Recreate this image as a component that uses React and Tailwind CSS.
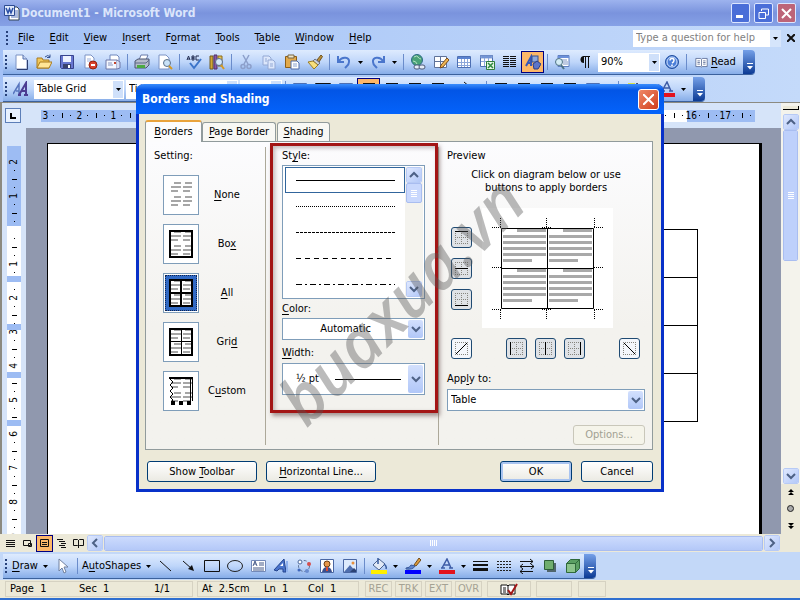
import React, { useState } from 'react';

// 16x16 toolbar glyphs
const glyphs = {
  newDoc: (
    <>
      <path d="M3 1h7l4 4v10H3z" fill="#fff" stroke="#7d93c4" />
      <path d="M10 1v4h4" fill="#c9d8f5" stroke="#5571ad" />
      <path d="M4 15.500h10.500V6" stroke="#2e3f70" fill="none" />
    </>
  ),
  open: (
    <>
      <path d="M1 14V4h5l1 2h6v8z" fill="#f2c85a" stroke="#a87b1e" />
      <path d="M1 14l3-6h12l-3 6z" fill="#ffe597" stroke="#a87b1e" />
      <path d="M9 3q3-3 5 0M14 .5V3.500h-3" fill="none" stroke="#33508f" />
    </>
  ),
  save: (
    <>
      <path d="M1.500 1.500h13v13h-12l-1-1z" fill="#6877d0" stroke="#38438e" />
      <path d="M4 2h8v6H4z" fill="#eef2ff" />
      <path d="M4 10h8v4H4z" fill="#39416e" />
      <path d="M9 11h2v3H9z" fill="#fff" />
    </>
  ),
  permission: (
    <>
      <path d="M3 1h6l3 3v10H3z" fill="#fff" stroke="#7d93c4" />
      <path d="M5 5h4M5 7h5" stroke="#9fb2dd" />
      <circle cx="11" cy="11" r="4" fill="#d8412d" stroke="#94230f" />
      <path d="M9 11h4" stroke="#fff" strokeWidth="2" />
    </>
  ),
  mail: (
    <>
      <path d="M5 6V1h7l2 2v5" fill="#fff" stroke="#6f87bd" />
      <path d="M1 6h11v9H1z" fill="#f4f7ff" stroke="#6f78a8" />
      <path d="M3 9h4M3 11h5" stroke="#8894bd" />
      <path d="M12 6l3 2v6l-3 1" fill="#d5ddf5" stroke="#6f78a8" />
      <path d="M9 8h2v2H9z" fill="#c4442e" />
    </>
  ),
  print: (
    <>
      <path d="M5 6l2-5h7l-2 5" fill="#fff" stroke="#697aa8" />
      <path d="M1 7l3-2h11v6l-3 3H1z" fill="#b6bccb" stroke="#4b5570" />
      <path d="M1 9h11l3-3" stroke="#5f6b88" fill="none" />
      <path d="M3 11h8v3H3z" fill="#4caa42" />
    </>
  ),
  preview: (
    <>
      <path d="M2 1h7l3 3v11H2z" fill="#fff" stroke="#7d93c4" />
      <circle cx="10" cy="9" r="3.500" fill="#c9e2f7" stroke="#5c7188" />
      <path d="M12 12l3 3" stroke="#d59a24" strokeWidth="2" />
    </>
  ),
  spell: (
    <>
      <path d="M1 6l1.500-4L4 6M1.500 5h2M6 2v4h2V4H6h2V2zM13 2h-3v4h3" fill="none" stroke="#222c50" />
      <path d="M4 9l4 5 7-9" fill="none" stroke="#3b74c9" strokeWidth="2" />
    </>
  ),
  research: (
    <>
      <path d="M1 2h3v13H1z" fill="#d1a735" stroke="#715b20" />
      <path d="M5 1h3v14H5z" fill="#8b56a8" stroke="#51336b" />
      <path d="M9 2h4v10H9z" fill="#e8c556" stroke="#8a6a1a" />
      <circle cx="10" cy="8" r="3.500" fill="#d5e8fa" stroke="#576d8b" />
      <path d="M12 11l3 4" stroke="#d59a24" strokeWidth="2" />
    </>
  ),
  cut: (
    <g fill="none" stroke="#8c9fca" strokeWidth="1.500">
      <path d="M5 1l5 9M11 1L6 10" />
      <circle cx="5" cy="12.500" r="2" />
      <circle cx="11" cy="12.500" r="2" />
    </g>
  ),
  copy: (
    <g fill="#dce7fb" stroke="#93a8d4">
      <path d="M2 2h6l2 2v7H2z" />
      <path d="M7 6h5l2 2v7H7z" />
      <path d="M9 10h3M9 12h3M4 5h2M4 7h2" />
    </g>
  ),
  paste: (
    <>
      <path d="M1.500 2.500h11v11h-11z" fill="#e2a94a" stroke="#8c5e17" />
      <path d="M4 1h6v3H4z" fill="#efe5c8" stroke="#776541" />
      <path d="M7 7h6l2 2v6H7z" fill="#fff" stroke="#506aa8" />
      <path d="M9 10h4M9 12h4" stroke="#8aa0d0" />
    </>
  ),
  brush: (
    <>
      <path d="M10 6l4-5 1.500 1.500L12 8z" fill="#b98e3a" stroke="#6f5420" />
      <path d="M8 5l5 4-2 2-5-4z" fill="#c9ced9" stroke="#697088" />
      <path d="M6 7l5 4-4 4L1 8z" fill="#f7df7c" stroke="#9b7c24" />
    </>
  ),
  undo: <path d="M2 2v6h6M3 7c3-5 11-4 10 1 0 3-2 4-4 6" fill="none" stroke="#4a76cc" strokeWidth="2" />,
  redo: <path d="M14 2v6H8M13 7C10 2 2 3 3 8c0 3 2 4 4 6" fill="none" stroke="#4a76cc" strokeWidth="2" />,
  link: (
    <>
      <circle cx="7" cy="6" r="5.500" fill="#4aa377" stroke="#2c6a86" />
      <path d="M4 3q3-2 4 0t3 2M3 7q3 0 4 3" fill="none" stroke="#b6e2c6" />
      <rect x="4" y="11" width="6" height="4" rx="2" fill="#e5ecf8" stroke="#4d5a78" />
      <rect x="9" y="11" width="6" height="4" rx="2" fill="#e5ecf8" stroke="#4d5a78" />
    </>
  ),
  drawTable: (
    <>
      <path d="M1.500 2.500h12v11h-12zM1 7.500h12M7.500 2v11" fill="#fff" stroke="#5f7299" />
      <path d="M7 14l1-3 6-7 2 2-6 7z" fill="#edb654" stroke="#7c4c1a" />
    </>
  ),
  table: (
    <>
      <path d="M1.500 2.500h13v11h-13z" fill="#fff" stroke="#4d6fb3" />
      <path d="M2 3h12v2H2z" fill="#5a82d0" />
      <path d="M2 8.500h12M2 11.500h12M5.500 5v8M8.500 5v8M11.500 5v8" stroke="#8ca7da" />
    </>
  ),
  excel: (
    <>
      <path d="M1.500 1.500h12v11h-12z" fill="#fff" stroke="#4d6fb3" />
      <path d="M2 2h11v2H2zM2 7.500h11M5.500 4v8M9.500 4v8" fill="#5a82d0" stroke="#8ca7da" />
      <path d="M7.500 7.500h8v8h-8z" fill="#e6f5e6" stroke="#2e7d3c" />
      <path d="M9 9l5 5M14 9l-5 5" stroke="#2e8a3f" strokeWidth="1.500" />
    </>
  ),
  columns: <path d="M1 2.500h6M1 4.500h6M1 6.500h6M1 8.500h6M1 10.500h6M1 12.500h6M8 2.500h6M8 4.500h6M8 6.500h6M8 8.500h6M8 10.500h6M8 12.500h6" stroke="#111" />,
  drawing: (
    <>
      <path d="M1 12L6 3v9M3 9h3" fill="none" stroke="#3657b8" strokeWidth="2" />
      <rect x="7" y="2" width="6" height="6" fill="#8ea8dd" stroke="#37508e" />
      <path d="M8 10l4-3 4 3-3 5H9z" fill="#5d75c9" stroke="#2c3f86" />
    </>
  ),
  docMap: (
    <>
      <path d="M4 1.500h11v11H4z" fill="#fff" stroke="#5f7fc0" />
      <path d="M4 2h11v2H4z" fill="#6b90da" />
      <path d="M8 6h5M9 8h5M9 10h5" stroke="#7f95c4" />
      <circle cx="5" cy="8" r="3.500" fill="#d3ecf5" stroke="#4d7285" />
      <path d="M7 11l3 4" stroke="#4d7285" strokeWidth="2" />
    </>
  ),
  pilcrow: (
    <>
      <path d="M7 2a3.500 3.500 0 0 0 0 7z" fill="#111" />
      <path d="M6 2.500h7M8.500 2v12M11.500 2v12" stroke="#111" />
    </>
  ),
  help: (
    <>
      <circle cx="8" cy="8" r="6.500" fill="#4c7fd8" stroke="#23509f" />
      <circle cx="8" cy="8" r="5" fill="none" stroke="#cfe0fa" />
      <path d="M6 6.500q0-2 2-2t2 1.700T8 9M8 10.500v1.500" fill="none" stroke="#fff" strokeWidth="1.500" />
    </>
  ),
  read: (
    <>
      <path d="M1 3h6l1 1 1-1h6v10H9l-1 1-1-1H1z" fill="#fff" stroke="#596a94" />
      <path d="M8 4v9M3 6h3M3 8h3M3 10h3M10 6h3M10 8h3M10 10h3" stroke="#596a94" />
    </>
  ),
  styles: (
    <>
      <path d="M0 13L6 3v10M3 10h3" fill="none" stroke="#5876be" strokeWidth="1.500" />
      <path d="M6 14l7-12v12M9 10h4M5 14h3M11 14h4" fill="none" stroke="#4c3d92" strokeWidth="2" />
    </>
  ),
  align: <path d="M2 2.500h12M2 5.500h8M2 8.500h12M2 11.500h8" stroke="#111" />,
  highlight: (
    <>
      <path d="M3 2h7v4H3z" fill="#d8e34a" />
      <path d="M1 12h14v3H1z" fill="#ff0" />
      <path d="M5 10l7-8 2 2-6 7z" fill="#d6dbe7" stroke="#495274" />
    </>
  ),
  fontColor: (
    <>
      <path d="M3 10L8 1l4 9M5 7h5M2 10h4M10 10h4" fill="none" stroke="#3e5ca6" strokeWidth="1.500" />
      <path d="M0 12h16v4H0z" fill="#e3121d" />
    </>
  ),
  cursor: <path d="M4 1v12l3-3 2 5 2-1-2-5h4z" fill="#fff" stroke="#70809f" />,
  line: <path d="M2 3l11 10" stroke="#111" />,
  arrow: (
    <>
      <path d="M2 3l9 8" stroke="#111" />
      <path d="M13 13l-6-2 4-4z" fill="#111" />
    </>
  ),
  rect: <path d="M.5 2.500h15v11H.5z" fill="none" stroke="#111" />,
  oval: <ellipse cx="8" cy="8" rx="7.500" ry="5.500" fill="none" stroke="#222" />,
  textBox: (
    <>
      <path d="M1.500 2.500h14v11h-14z" fill="#fff" stroke="#7389b8" />
      <path d="M3 8l2-5 2 5M4 6h2M9 5h5M9 7h5M3 10h11M3 12h11" fill="none" stroke="#465a89" />
    </>
  ),
  wordArt: (
    <>
      <path d="M1 12L11 1l2 13h-3v-3H6l-2 2z" fill="#4a74cc" stroke="#24458f" />
      <path d="M7 8l3-3v3z" fill="#fff" />
      <path d="M14 3v11" stroke="#8fb1ee" strokeWidth="2" />
    </>
  ),
  diagram: (
    <>
      <circle cx="8" cy="8" r="5.500" fill="none" stroke="#5c6f93" strokeDasharray="3 2" />
      <circle cx="4" cy="4" r="2" fill="#fff" stroke="#4d6a9d" />
      <circle cx="13" cy="6" r="2" fill="#d64e4e" />
      <circle cx="3" cy="12" r="1.500" fill="#3e67bd" />
      <circle cx="11" cy="13" r="2" fill="#6a8ccf" />
    </>
  ),
  clipArt: (
    <>
      <path d="M1.500 1.500h13v13h-13z" fill="#fff" stroke="#4966a2" />
      <circle cx="8" cy="6" r="3" fill="#e6974a" stroke="#6b3e16" />
      <path d="M3 14q1-5 5-5t5 5z" fill="#3a4f8e" />
      <path d="M7 9h2v4H7z" fill="#d84b35" />
    </>
  ),
  picture: (
    <>
      <path d="M1.500 1.500h13v13h-13z" fill="#dceafc" stroke="#4966a2" />
      <path d="M2 14l6-7 6 7z" fill="#4e6eae" />
      <path d="M8 14l4-4 2 2v2z" fill="#2b4274" />
      <circle cx="11" cy="5" r="1.500" fill="#e7903c" />
    </>
  ),
  fill: (
    <>
      <path d="M2 7l6-6 6 5-6 6z" fill="#e1e9f5" stroke="#48618f" />
      <path d="M7 6V0M13 6q3 2 2 5" fill="none" stroke="#365b9e" strokeWidth="1.500" />
      <path d="M0 12h16v4H0z" fill="#ffef00" />
    </>
  ),
  pen: (
    <>
      <path d="M9 7l5-7 2 2-5 6z" fill="#dd9b3c" stroke="#704c18" />
      <path d="M1 10q4 0 5-3l4 1q-2 4-9 3z" fill="#5f86cf" stroke="#38589a" />
      <path d="M0 12h16v4H0z" fill="#00f" />
    </>
  ),
  lineStyle: (
    <>
      <path d="M0 3.500h15" stroke="#111" />
      <path d="M0 7h15" stroke="#111" strokeWidth="2" />
      <path d="M0 11.500h15" stroke="#111" strokeWidth="3" />
    </>
  ),
  dashStyle: <path d="M1 3.500h14M1 6.500h14M1 9.500h14M1 12.500h14" stroke="#222" strokeDasharray="2 1" />,
  arrowStyle: <path d="M1 3.500h13M11 1l3 2.500L11 6M1 8.500h14M4 6L1 8.500 4 11M12 6l3 2.500-3 2.500M1 13.500h13M4 11l-3 2.500L4 16" fill="none" stroke="#111" />,
  shadow: (
    <>
      <path d="M5 5h9v9H5z" fill="#50666d" />
      <path d="M2.500 2.500h9v9h-9z" fill="#6fae6e" stroke="#2d5f38" />
    </>
  ),
  cube: (
    <>
      <path d="M1.500 5.500h9v9h-9z" fill="#8cc48c" stroke="#2f6a3b" />
      <path d="M1.500 5.500l4-4h9l-4 4zM10.500 14.500l4-4v-9l-4 4z" fill="#5a9f62" stroke="#2f6a3b" />
    </>
  ),
};

const Glyph = ({ name, size = 16 }) => (
  <svg width={size} height={size} viewBox="0 0 16 16" fill="none" aria-hidden="true">
    {glyphs[name]}
  </svg>
);

const Tool = ({ name, active }) => (
  <button
    type="button"
    aria-label={name}
    className={`flex h-[22px] w-[23px] shrink-0 items-center justify-center ${
      active ? 'border border-[#000080] bg-[#fdb768]' : ''
    }`}
  >
    <Glyph name={name} />
  </button>
);

const Caret = ({ wide = true }) => (
  <span className={`flex shrink-0 items-center justify-center ${wide ? 'w-[11px]' : 'w-[9px]'}`}>
    <svg width="5" height="3" viewBox="0 0 5 3" aria-hidden="true">
      <path d="M0 0h5L2.500 3z" fill="#000" />
    </svg>
  </span>
);

const Sep = () => (
  <span className="flex w-[6px] shrink-0 justify-center">
    <span className="h-[16px] w-px bg-[#6a8ccb]" />
  </span>
);

const Grip = () => (
  <span className="flex w-[6px] shrink-0 flex-col items-center gap-[2px]">
    {[0, 1, 2, 3].map((i) => (
      <span key={i} className="h-[2px] w-[2px] bg-[#27417a]" />
    ))}
  </span>
);

const EndCap = () => (
  <button
    type="button"
    aria-label="Toolbar options"
    className="flex w-[12px] shrink-0 items-end justify-center self-stretch rounded-r bg-linear-to-b from-[#75a0e8] to-[#0b3a94] pb-1"
  >
    <svg width="7" height="7" viewBox="0 0 7 7" aria-hidden="true">
      <path d="M1 .5h6" stroke="#fff" />
      <path d="M1 3h6L4 6.500z" fill="#fff" />
    </svg>
  </button>
);

const BarSelect = ({ label, value, className }) => (
  <span className={`relative flex h-[19px] shrink-0 bg-white ${className}`}>
    <select aria-label={label} className="h-full w-full appearance-none bg-transparent pl-[3px] outline-none">
      <option>{value}</option>
    </select>
    <span className="pointer-events-none absolute inset-y-px right-px flex w-[10px] items-center justify-center bg-[#cfe0fa]">
      <Caret wide={false} />
    </span>
  </span>
);

// Label with an underlined access key
const Key = ({ text, at = 0 }) => (
  <>
    {text.slice(0, at)}
    <span className="underline underline-offset-2">{text[at]}</span>
    {text.slice(at + 1)}
  </>
);

const Chevron = ({ dir = 'down' }) => {
  const paths = {
    down: 'M1 3l4 4 4-4',
    up: 'M1 7l4-4 4 4',
    left: 'M7 1L3 5l4 4',
    right: 'M3 1l4 4-4 4',
  };
  return (
    <svg width="10" height="10" viewBox="0 0 10 10" fill="none" aria-hidden="true">
      <path d={paths[dir]} stroke="#4d6185" strokeWidth="2" />
    </svg>
  );
};

const ScrollButton = ({ dir }) => (
  <button
    type="button"
    aria-label={`Scroll ${dir}`}
    className="flex h-[16px] w-[16px] shrink-0 items-center justify-center rounded-xs border border-white bg-linear-to-br from-[#dfe8fe] to-[#b3c8f8] outline outline-[#b7caf5] -outline-offset-1"
  >
    <Chevron dir={dir} />
  </button>
);

const TitleBar = () => (
  <header className="flex h-[26px] shrink-0 items-center bg-linear-to-b from-[#9db3ee] via-[#7a93dd] to-[#86a1e6] px-1">
    <svg width="16" height="16" viewBox="0 0 16 16" aria-hidden="true">
      <path d="M5 2h8l2 2v11H5z" fill="#fff" stroke="#345" />
      <path d="M10 6h4M10 8h4M10 10h4M7 12h7" stroke="#5877bb" />
      <path d="M.5.5h10v10H.5z" fill="#dfe9fb" stroke="#2d4b93" />
      <path d="M2 3l2 5 1.500-4L7 8l2-5" fill="none" stroke="#2a4ea5" strokeWidth="1.500" />
    </svg>
    <h1 className="ml-px flex-1 text-[12px] leading-4 font-bold text-[#dbe5fb]">Document1 - Microsoft Word</h1>
    <div className="flex gap-1">
      <button type="button" aria-label="Minimize" className="flex h-[20px] w-[19px] items-end rounded-xs border border-[#dce6ff] bg-[#4a6ed8] p-1">
        <span className="h-[3px] w-[7px] bg-white" />
      </button>
      <button type="button" aria-label="Restore" className="flex h-[20px] w-[19px] items-center justify-center rounded-xs border border-[#dce6ff] bg-[#4a6ed8]">
        <svg width="11" height="11" viewBox="0 0 11 11" fill="none" stroke="#fff" aria-hidden="true">
          <path d="M3.500 3V1h7v6H8M1 4.500h6.500v6H1z" />
        </svg>
      </button>
      <button type="button" aria-label="Close" className="flex h-[20px] w-[19px] items-center justify-center rounded-xs border border-[#dce6ff] bg-[#bd6478]">
        <svg width="11" height="11" viewBox="0 0 11 11" stroke="#fff" strokeWidth="2" aria-hidden="true">
          <path d="M1 1l9 9M10 1l-9 9" />
        </svg>
      </button>
    </div>
  </header>
);

const menus = [['File', 0], ['Edit', 0], ['View', 0], ['Insert', 0], ['Format', 1], ['Tools', 0], ['Table', 1], ['Window', 0], ['Help', 0]];

const MenuBar = () => (
  <nav className="flex h-[24px] shrink-0 items-center pl-1">
    <Grip />
    <div className="flex flex-1">
      {menus.map(([text, at]) => (
        <button key={text} type="button" className="pr-[7px] pl-2">
          <Key text={text} at={at} />
        </button>
      ))}
    </div>
    <div className="flex h-[17px] w-[148px] bg-white">
      <input aria-label="Help question" placeholder="Type a question for help" className="w-full min-w-0 bg-transparent pl-[3px] outline-none placeholder:text-[#7f7f7f]" />
      <span className="flex w-[12px] items-center justify-center bg-[#d6e5fb]">
        <Caret />
      </span>
    </div>
    <button type="button" aria-label="Close document" className="flex w-[19px] justify-center">
      <svg width="8" height="8" viewBox="0 0 8 8" stroke="#111" strokeWidth="2" aria-hidden="true">
        <path d="M0 0l8 8M8 0L0 8" />
      </svg>
    </button>
  </nav>
);

const bandClass = 'flex h-[24px] w-fit shrink-0 items-center rounded-r bg-linear-to-b from-[#deebfe] via-[#bfd6fa] to-[#87ade8] shadow-[0_1px_0_#3b619c]';

const StandardBar = () => (
  <div className={`${bandClass} ml-[3px]`}>
    <Grip />
    {['newDoc', 'open', 'save', 'permission', 'mail'].map((n) => <Tool key={n} name={n} />)}
    <Sep />
    <Tool name="print" />
    <Tool name="preview" />
    <Sep />
    <Tool name="spell" />
    <Tool name="research" />
    <Sep />
    {['cut', 'copy', 'paste', 'brush'].map((n) => <Tool key={n} name={n} />)}
    <Sep />
    <Tool name="undo" />
    <Caret />
    <Tool name="redo" />
    <Caret />
    <Sep />
    {['link', 'drawTable', 'table', 'excel', 'columns'].map((n) => <Tool key={n} name={n} />)}
    <Tool name="drawing" active />
    <Sep />
    <Tool name="docMap" />
    <Tool name="pilcrow" />
    <BarSelect label="Zoom" value="90%" className="ml-[2px] w-[62px]" />
    <Tool name="help" />
    <Sep />
    <button type="button" className="flex w-[54px] items-center gap-[3px] pl-[6px]">
      <Glyph name="read" size={13} />
      <span><Key text="Read" /></span>
    </button>
    <EndCap />
  </div>
);

const FormattingBar = () => (
  <div className={`${bandClass} mt-[3px] ml-[3px]`}>
    <Grip />
    <Tool name="styles" />
    <BarSelect label="Style" value="Table Grid" className="ml-[2px] w-[90px]" />
    <BarSelect label="Font" value="Times New Roman" className="ml-[2px] w-[112px]" />
    <BarSelect label="Font size" value="12" className="ml-[2px] w-[42px]" />
    <Sep />
    <Tool name="table" />
    <Tool name="rect" />
    <Tool name="table" />
    <Tool name="align" active />
    <Tool name="align" />
    <Tool name="align" />
    <Tool name="align" />
    <Tool name="arrowStyle" />
    <Caret />
    <Sep />
    {['align', 'align', 'align', 'align', 'table'].map((n, i) => <Tool key={i} name={n} />)}
    <Caret />
    <Sep />
    <Tool name="highlight" />
    <Caret />
    <Tool name="fontColor" />
    <Caret />
    <span className="w-1" />
    <EndCap />
  </div>
);

// One centimetre of ruler: the number followed by dot, tick, dot
const rulerMarks = ['3', '2', '1', '', ...Array.from({ length: 17 }, (_, i) => String(i + 1))];

const HorizontalRuler = () => (
  <div className="flex h-[25px] items-center overflow-hidden bg-[#d6e4f9] pl-[3px]">
    <button type="button" aria-label="Tab stop" className="flex h-[15px] w-[16px] shrink-0 items-center justify-center border border-[#5c7eb8] bg-[#e8f1fe]">
      <svg width="6" height="6" viewBox="0 0 6 6" aria-hidden="true">
        <path d="M1 0v5h5" fill="none" stroke="#000" strokeWidth="2" />
      </svg>
    </button>
    <div className="ml-5 flex h-[12px] flex-1 overflow-hidden text-[10px] leading-3">
      {rulerMarks.map((mark, i) => (
        <div
          key={i}
          className={`grid w-[34px] shrink-0 grid-cols-4 place-items-center ${i < 3 || i > 18 ? 'bg-[#9dbcf3]' : 'bg-white'}`}
        >
          <span className="flex w-2 justify-center">{mark}</span>
          <span className="size-px bg-black" />
          <span className="h-[5px] w-px bg-black" />
          <span className="size-px bg-black" />
        </div>
      ))}
    </div>
    <span className="w-[24px] shrink-0" />
  </div>
);

const VerticalRuler = () => (
  <div className="w-[24px] shrink-0 overflow-hidden bg-[#d6e4f9] px-[5px] pt-[18px] text-[10px] leading-3">
    <div className="h-[12px] w-[14px] bg-[#9dbcf3]" />
    {['2', '1', '', '1', '2', '3', '4', '5', '6', '7', '8', '9'].map((mark, i) => (
      <div key={i} className={`grid h-[34px] w-[14px] grid-rows-4 place-items-center ${i < 2 ? 'bg-[#9dbcf3]' : 'bg-white'}`}>
        <span className="flex h-2 -rotate-90 items-center">{mark}</span>
        <span className="size-px bg-black" />
        <span className="h-px w-[5px] bg-black" />
        <span className="size-px bg-black" />
      </div>
    ))}
  </div>
);

// Row boundary handles that sit over the vertical ruler
const RowHandles = () => (
  <div className="absolute top-[148px] left-[5px] flex flex-col gap-[42px]">
    {[0, 1, 2, 3].map((i) => (
      <span key={i} className="h-[6px] w-[14px] bg-[#9dbcf3]" />
    ))}
  </div>
);

const DocumentArea = () => (
  <div className="relative flex min-h-0 flex-1 overflow-hidden bg-[#9098ae]">
    <VerticalRuler />
    <RowHandles />
    <main className="mt-[15px] mr-[19px] ml-[21px] flex-1 border-t border-r-3 border-l border-black bg-white pt-[85px] pl-[101px]">
      <table className="w-[549px] border-collapse">
        <tbody>
          {[0, 1, 2, 3].map((row) => (
            <tr key={row} className="h-[48px]">
              <td className="border border-black" />
              <td className="border border-black" />
            </tr>
          ))}
        </tbody>
      </table>
    </main>
  </div>
);

const VerticalScroll = () => (
  <div className="flex w-[19px] shrink-0 flex-col items-center bg-[#f4f3ec]">
    <span className="mt-[3px] mb-1 h-1 w-[16px] border-r border-b border-black bg-[#ece9d8]" />
    <ScrollButton dir="up" />
    <div className="flex h-[131px] w-[15px] flex-col items-center justify-center gap-px rounded-xs border border-white bg-[#bed0fb] outline outline-[#a9bdf0] -outline-offset-1">
      {[0, 1, 2, 3].map((i) => <span key={i} className="h-px w-[6px] bg-white" />)}
    </div>
    <span className="flex-1" />
    <ScrollButton dir="down" />
    <div className="flex h-[50px] w-full flex-col items-center justify-around bg-[#ece9d8]">
      <svg width="6" height="6" viewBox="0 0 6 6"><path d="M3 0l3 3H0zM3 3l3 3H0z" /></svg>
      <svg width="7" height="7" viewBox="0 0 7 7"><circle cx="3.500" cy="3.500" r="3" fill="#aaa" stroke="#222" /></svg>
      <svg width="6" height="6" viewBox="0 0 6 6"><path d="M3 3L0 0h6zM3 6L0 3h6z" /></svg>
    </div>
  </div>
);

const viewIcons = [
  ['Normal', 'M1 2.500h9M1 4.500h9M1 6.500h9M1 8.500h9'],
  ['Web Layout', 'M1.500 2.500h7v5h-7zM6.500 5.500h3v3h-3z'],
  ['Print Layout', 'M1.500 1.500h8v7h-8zM3 4.500h5M3 6.500h5'],
  ['Outline', 'M1 1.500h6M3 3.500h6M5 5.500h5M3 7.500h6M5 9.500h5'],
  ['Reading Layout', 'M.5 1.500h4l1 1 1-1h4v6h-4l-1 1-1-1h-4zM5.500 2v8'],
];

const BottomScroll = () => (
  <div className="flex h-[18px] shrink-0 items-center bg-[#ece9d8] pl-[2px]">
    {viewIcons.map(([label, d], i) => (
      <button
        key={label}
        type="button"
        aria-label={label}
        className={`flex h-[17px] w-[17px] shrink-0 items-center justify-center ${i === 2 ? 'border border-[#000080] bg-[#fdb768]' : ''}`}
      >
        <svg width="11" height="10" viewBox="0 0 11 10" fill="none" stroke="#111"><path d={d} /></svg>
      </button>
    ))}
    <ScrollButton dir="left" />
    <div className="mx-px flex h-[15px] flex-1 items-center justify-center gap-px rounded-xs border border-white bg-linear-to-b from-[#ccdbfd] to-[#b4c8f8] outline outline-[#a9bdf0] -outline-offset-1">
      {[0, 1, 2, 3].map((i) => <span key={i} className="h-[6px] w-px bg-white" />)}
    </div>
    <ScrollButton dir="right" />
    <span className="w-[20px]" />
  </div>
);

const DrawingBar = () => (
  <div className="flex h-[28px] shrink-0 items-center bg-[#c3d8f8] pl-[3px]">
    <div className={bandClass}>
      <Grip />
      <button type="button" className="flex w-[42px] items-center justify-between pl-[3px]">
        <span><Key text="Draw" /></span>
        <Caret />
      </button>
      <Tool name="cursor" />
      <Sep />
      <button type="button" className="flex w-[74px] items-center justify-between pl-[2px]">
        <span><Key text="AutoShapes" at={1} /></span>
        <Caret />
      </button>
      {['line', 'arrow', 'rect', 'oval', 'textBox', 'wordArt', 'diagram', 'clipArt', 'picture'].map((n) => <Tool key={n} name={n} />)}
      <Sep />
      <Tool name="fill" />
      <Caret />
      <Tool name="pen" />
      <Caret />
      <Tool name="fontColor" />
      <Caret />
      {['lineStyle', 'dashStyle', 'arrowStyle', 'shadow', 'cube'].map((n) => <Tool key={n} name={n} />)}
      <EndCap />
    </div>
  </div>
);

const StatusBar = () => (
  <footer className="flex h-[20px] shrink-0 items-center border-b-2 border-[#2f6fd0] bg-[#ece9d8] pl-[5px]">
    <div className="flex h-[16px] w-[188px] items-center border border-[#d6d2c2] pl-1">
      <span className="w-[69px]">Page&nbsp; 1</span>
      <span className="w-[75px]">Sec&nbsp; 1</span>
      <span>1/1</span>
    </div>
    <div className="ml-1 flex h-[16px] w-[162px] items-center border border-[#d6d2c2] pl-1">
      <span className="w-[62px]">At&nbsp; 2.5cm</span>
      <span className="w-[44px]">Ln&nbsp; 1</span>
      <span>Col&nbsp; 1</span>
    </div>
    <div className="ml-[6px] flex gap-[3px] text-[#a5a294]">
      {['REC', 'TRK', 'EXT', 'OVR'].map((t) => (
        <span key={t} className="flex h-[16px] w-[27px] items-center justify-center border border-[#d6d2c2]">{t}</span>
      ))}
    </div>
    <div className="ml-[5px] flex h-[16px] w-[44px] items-center justify-center border border-[#d6d2c2]">
      <svg width="18" height="13" viewBox="0 0 18 13" fill="none" aria-hidden="true">
        <path d="M1 2h6l1 1 1-1h6v9H9l-1 1-1-1H1zM8 3v8M3 5h3M3 7h3M3 9h3" fill="#fff" stroke="#111" />
        <path d="M8 7l3 4 6-10" stroke="#a31616" strokeWidth="2" />
      </svg>
    </div>
    <div className="ml-[5px] flex gap-[6px]">
      <span className="h-[16px] w-[36px] border border-[#d6d2c2]" />
      <span className="h-[16px] w-[28px] border border-[#d6d2c2]" />
    </div>
  </footer>
);

// ---- Borders and Shading dialog ----

const textLines = (
  <path
    d="M10 7h7M7 11h10M7 15h7M21 7h7M19 11h9M19 15h7M10 21h7M7 25h10M7 29h7M21 21h7M19 25h9M19 29h7"
    stroke="#a6a6a6"
    strokeWidth="2"
  />
);

const settings = [
  { name: 'None', key: 0, frame: null },
  { name: 'Box', key: 2, frame: <path d="M6 6h22v26H6z" strokeWidth="2" /> },
  { name: 'All', key: 0, frame: <path d="M6 6h22v26H6zM17 6v26M6 19h22" strokeWidth="2" /> },
  {
    name: 'Grid',
    key: 3,
    frame: (
      <>
        <path d="M6 6h22v26H6z" strokeWidth="2" />
        <path d="M17.500 6v26M6 18.500h22" />
      </>
    ),
  },
  {
    name: 'Custom',
    key: 1,
    frame: (
      <>
        <path d="M5 6h24" strokeWidth="2" />
        <path d="M26.500 7v22M28.500 7v22" />
        <path d="M6 7l3 3-3 3 3 3-3 3 3 3-3 3 3 3-2 2" />
        <path d="M7 31h20" strokeWidth="4" strokeDasharray="4 4" />
      </>
    ),
  },
];

const SettingColumn = () => {
  const [selected, setSelected] = useState('All');
  return (
    <section className="w-[119px] shrink-0 pt-[2px] pl-2">
      <h3 className="leading-[14px]">Setting:</h3>
      <div className="mt-3 ml-[9px] flex flex-col gap-[9px]">
        {settings.map(({ name, key, frame }) => (
          <button key={name} type="button" onClick={() => setSelected(name)} aria-pressed={selected === name} className="flex items-center">
            <span className="relative flex h-[40px] w-[36px] items-center justify-center border border-[#7f9db9] bg-white">
              {selected === name && (
                <span className="absolute inset-px border border-dotted border-[#10244d] bg-[#316ac5] p-[3px]">
                  <span className="block h-full w-full bg-white" />
                </span>
              )}
              <svg width="34" height="38" viewBox="0 0 34 38" fill="none" stroke="#000" className="relative">
                {textLines}
                {frame}
              </svg>
            </span>
            <span className="w-[56px] text-center">
              <Key text={name} at={key} />
            </span>
          </button>
        ))}
      </div>
    </section>
  );
};

const DialogSelect = ({ id, value, height, center, children }) => (
  <div className={`relative border border-[#7f9db9] bg-white ${height}`}>
    <select id={id} className={`h-full w-full appearance-none bg-transparent outline-none ${center}`}>
      <option>{value}</option>
    </select>
    {children}
    <span className="pointer-events-none absolute inset-y-px right-px flex w-[15px] items-center justify-center rounded-xs bg-linear-to-b from-[#d3e0fd] to-[#b1c7f8]">
      <Chevron />
    </span>
  </div>
);

const lineStyles = ['', '1 1', '3 1', '5 4', '6 3 2 3'];

const StyleColumn = () => {
  const [selected, setSelected] = useState(0);
  return (
    <section className="relative w-[174px] shrink-0 border-x border-[#aca899] pt-[2px] pr-[13px] pl-4">
      <div className="pointer-events-none absolute -top-[4px] right-0 bottom-[32px] left-1 border-3 border-[#a31515] shadow-[2px_3px_4px_rgba(90,60,60,0.5),inset_2px_2px_4px_rgba(90,60,60,0.35)]" />
      <h3 className="leading-[14px]"><Key text="Style:" at={2} /></h3>
      <div className="mt-[2px] flex h-[134px] border border-[#7f9db9] bg-white p-px">
        <div className="flex flex-1 flex-col pl-px">
          {lineStyles.map((dash, i) => (
            <button
              key={i}
              type="button"
              aria-label={`Line style ${i + 1}`}
              onClick={() => setSelected(i)}
              className={`flex h-[26px] items-center justify-center border ${selected === i ? 'border-[#31659c]' : 'border-transparent'}`}
            >
              <svg width="99" height="1" aria-hidden="true">
                <path d="M0 .5h99" stroke="#000" strokeDasharray={dash} />
              </svg>
            </button>
          ))}
        </div>
        <div className="flex w-[18px] flex-col items-center bg-[#f4f3ee]">
          <ScrollButton dir="up" />
          <div className="flex h-[20px] w-[16px] flex-col items-center justify-center gap-px rounded-xs border border-[#a9bdf0] bg-[#c9d8fd]">
            {[0, 1, 2, 3].map((i) => <span key={i} className="h-px w-[6px] bg-white" />)}
          </div>
          <span className="flex-1" />
          <ScrollButton dir="down" />
        </div>
      </div>
      <label htmlFor="color" className="mt-[2px] block h-[17px] leading-4"><Key text="Color:" /></label>
      <DialogSelect id="color" value="Automatic" height="h-[22px]" center="pr-[16px] [text-align-last:center]" />
      <label htmlFor="width" className="mt-[5px] block h-[18px] leading-4"><Key text="Width:" /></label>
      <DialogSelect id="width" value="½ pt" height="h-[32px]" center="pl-[13px]">
        <span className="pointer-events-none absolute inset-y-0 right-[23px] flex items-center">
          <span className="h-px w-[66px] bg-black" />
        </span>
      </DialogSelect>
    </section>
  );
};

const BorderButton = ({ label, d, plain }) => (
  <button
    type="button"
    aria-label={label}
    className={`flex size-[21px] shrink-0 items-center justify-center rounded-[3px] border border-[#1f4a72] ${plain ? 'bg-[#f3f6fb]' : 'bg-[#dfe2e6]'}`}
  >
    <svg width="13" height="13" viewBox="0 0 13 13" fill="none" aria-hidden="true">
      <path d={plain ? 'M0 .5h13M0 12.500h13M.5 0v13M12.500 0v13' : 'M0 .5h13M0 12.500h13M.5 0v13M12.500 0v13M0 6.500h13M6.500 0v13'} stroke="#86857e" strokeDasharray="1 1" />
      <path d={d} stroke="#000" />
    </svg>
  </button>
);

const cellLines = 'M16 3.500h29M2 9.500h43M2 15.500h43M2 21.500h43M2 27.500h43M2 33.500h29';

const Diagram = () => (
  <svg width="131" height="120" viewBox="0 0 131 120" fill="none" className="bg-white">
    {[[19, 19], [65, 19], [19, 59], [65, 59]].map(([x, y]) => (
      <path key={`${x}-${y}`} d={cellLines} transform={`translate(${x} ${y})`} stroke="#a9a9a9" strokeWidth="3" />
    ))}
    <path d="M19.500 20.500h92v80h-92zM65.500 20v80M19 60.500h92" stroke="#000" />
    <path
      d="M10 19.500h9M18.500 10v9M60 19.500h9M64.500 10v9M112 19.500h9M112.500 10v9M10 59.500h9M112 59.500h9M10 101.500h9M18.500 102v9M60 101.500h9M64.500 102v9M112 101.500h9M112.500 102v9"
      stroke="#000"
      strokeDasharray="1 1"
    />
  </svg>
);

const PreviewColumn = () => (
  <section className="flex-1 pt-[2px] pr-[7px] pl-2">
    <h3 className="leading-[14px]">Preview</h3>
    <p className="mt-[5px] text-center leading-[13px]">
      Click on diagram below or use
      <br />
      buttons to apply borders
    </p>
    <div className="mt-[14px] ml-1 flex items-center gap-[10px]">
      <div className="flex flex-col gap-[10px]">
        <BorderButton label="Top border" d="M0 .5h13" />
        <BorderButton label="Inside horizontal border" d="M0 6.500h13" />
        <BorderButton label="Bottom border" d="M0 12.500h13" />
      </div>
      <Diagram />
    </div>
    <div className="mt-[10px] mr-[5px] ml-1 flex justify-between">
      <BorderButton label="Diagonal up" d="M1 12L12 1" plain />
      <div className="flex gap-2">
        <BorderButton label="Left border" d="M.5 0v13" />
        <BorderButton label="Inside vertical border" d="M6.500 0v13" />
        <BorderButton label="Right border" d="M12.500 0v13" />
      </div>
      <BorderButton label="Diagonal down" d="M1 1l11 11" plain />
    </div>
    <label htmlFor="apply" className="mt-3 mb-[2px] block leading-4"><Key text="Apply to:" at={3} /></label>
    <DialogSelect id="apply" value="Table" height="h-[22px]" center="pl-[3px]" />
    <div className="mt-[14px] flex justify-end">
      <button type="button" disabled className="h-[20px] w-[72px] rounded-[3px] border border-[#c9c7ba] bg-[#f5f4ea] text-[#a1a192]">
        Options...
      </button>
    </div>
  </section>
);

const pushClass = 'h-[21px] rounded-[3px] border border-[#003c74] bg-linear-to-b from-white to-[#ebeae3]';

const Dialog = () => (
  <div
    role="dialog"
    aria-label="Borders and Shading"
    className="absolute top-[84px] left-1/2 flex w-[528px] -translate-x-1/2 flex-col rounded-t-lg border-x-3 border-b-3 border-[#0831c9] bg-[#ece9d8]"
  >
    <div className="-mx-[3px] flex h-[30px] items-center justify-between rounded-t-lg bg-linear-to-b from-[#3a8dfc] via-[#0255e6] via-20% to-[#0463fb] pr-[5px] pl-[6px]">
      <h2 className="text-[12px] leading-4 font-bold text-white">Borders and Shading</h2>
      <button type="button" aria-label="Close dialog" className="flex size-[21px] items-center justify-center rounded-[3px] border border-white bg-linear-to-br from-[#ee8766] to-[#d03c17]">
        <svg width="11" height="11" viewBox="0 0 11 11" stroke="#fff" strokeWidth="2" aria-hidden="true">
          <path d="M0 0l11 11M11 0L0 11" />
        </svg>
      </button>
    </div>
    <div className="px-[6px] pt-[6px]">
      <div role="tablist" className="flex items-end">
        <button type="button" role="tab" aria-selected="true" className="relative z-10 -mb-px h-[22px] w-[57px] rounded-t-[3px] border-x border-t-2 border-[#919b9c] border-t-[#e9a33c] bg-[#fcfcfd]">
          <Key text="Borders" />
        </button>
        <button type="button" role="tab" className="h-[19px] w-[74px] rounded-t-[3px] border border-b-0 border-[#919b9c] bg-[#f8f8f4]">
          <Key text="Page Border" />
        </button>
        <button type="button" role="tab" className="ml-px h-[19px] w-[53px] rounded-t-[3px] border border-b-0 border-[#919b9c] bg-[#f8f8f4]">
          <Key text="Shading" />
        </button>
      </div>
      <div className="mr-[2px] flex border border-[#919b9c] bg-linear-to-b from-[#fcfcfe] to-[#f3f2ee] to-60% pt-[5px] pb-1">
        <SettingColumn />
        <StyleColumn />
        <PreviewColumn />
      </div>
    </div>
    <div className="flex px-2 pt-[11px] pb-[7px]">
      <button type="button" className={`${pushClass} w-[110px]`}><Key text="Show Toolbar" at={5} /></button>
      <button type="button" className={`${pushClass} ml-[9px] w-[110px]`}><Key text="Horizontal Line..." /></button>
      <button type="button" className={`${pushClass} ml-auto w-[72px] shadow-[inset_0_0_0_2px_#a9c4f0]`}>OK</button>
      <button type="button" className={`${pushClass} ml-[9px] w-[72px]`}>Cancel</button>
    </div>
  </div>
);

const Watermark = () => (
  <div className="pointer-events-none absolute top-[84px] left-1/2 flex h-[430px] w-[528px] -translate-x-1/2 items-center justify-center">
    <span className="-rotate-45 font-['Open_Sans',sans-serif] text-[66px] leading-none font-semibold text-[#555]/40 italic">
      buaxua.vn
    </span>
  </div>
);

export default function App() {
  return (
    <div className="relative flex h-screen flex-col overflow-hidden bg-linear-to-r from-[#a3c1f6] to-[#c4dafa] font-['DejaVu_Sans_Condensed','DejaVu_Sans',sans-serif] text-[11px] leading-[14px] whitespace-nowrap text-black">
      <TitleBar />
      <MenuBar />
      <StandardBar />
      <FormattingBar />
      <div className="mt-px flex min-h-0 flex-1 border-t border-l-2 border-[#8c8a80]">
        <div className="flex min-w-0 flex-1 flex-col">
          <HorizontalRuler />
          <DocumentArea />
        </div>
        <VerticalScroll />
      </div>
      <BottomScroll />
      <DrawingBar />
      <StatusBar />
      <Dialog />
      <Watermark />
    </div>
  );
}
